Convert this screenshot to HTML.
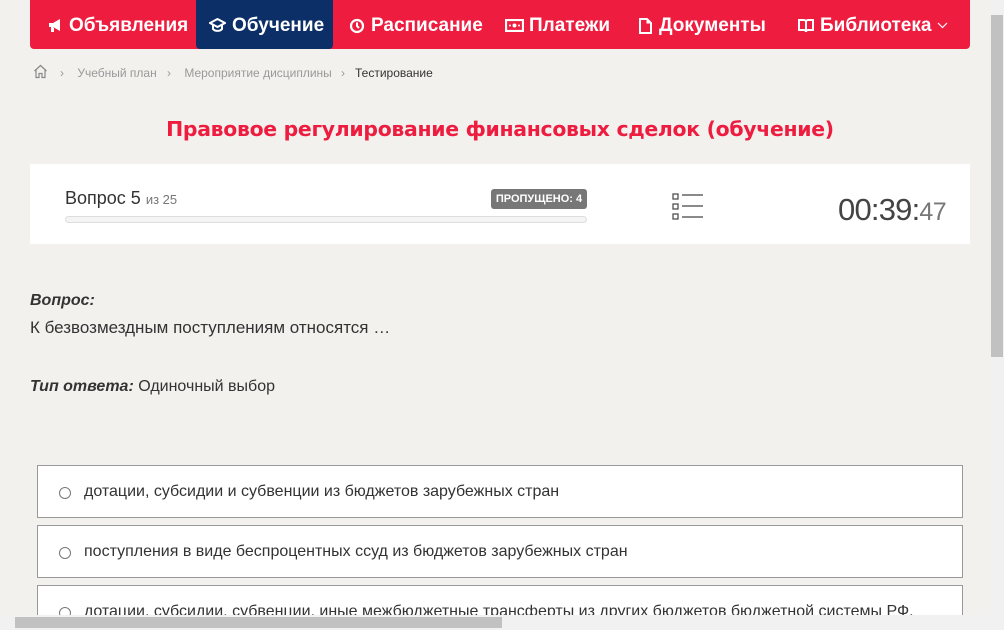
<!DOCTYPE html>
<html style="width:1004px;height:630px;overflow:hidden"><head><meta charset="utf-8"><style>
*{box-sizing:border-box;margin:0;padding:0}
body{width:1004px;height:630px;overflow:hidden;background:#f2f1ee;font-family:"Liberation Sans",sans-serif;position:relative;color:#333}
.nav{position:absolute;left:30px;top:0;width:940px;height:49px;background:#ee1d40;border-radius:0 0 4px 4px}
.nav div{position:absolute;top:0;height:49px;line-height:52px;color:#fff;font-size:19px;font-family:"Liberation Sans",sans-serif;font-weight:bold;white-space:nowrap}
.nav svg{position:absolute;top:18px}
.nav .act{background:#0b2f66;border-radius:0 0 4px 4px}
.bc{position:absolute;top:66px;font-size:12px;color:#999}
.title{position:absolute;top:117px;left:0;width:1000px;text-align:center;color:#ee1d40;font-size:20.4px;font-family:"DejaVu Sans",sans-serif;font-weight:bold;letter-spacing:-0.3px}
.panel{position:absolute;left:30px;top:164px;width:940px;height:80px;background:#fff}
.opt{position:absolute;left:37px;width:926px;height:53px;background:#fff;border:1px solid #999;font-size:16px;color:#333}
.opt span.r{position:absolute;left:21px;top:21px;width:12px;height:12px;border:1px solid #777;border-radius:50%}
.opt span.t{position:absolute;left:46px;top:17px}
</style></head><body>
<div class="nav">
 <svg style="left:18px" width="15" height="15" viewBox="0 0 15 15"><path d="M1 5H5L12 1V13L5 9H1Z M3 9V14H6V9" fill="#fff"/></svg>
 <div style="left:39px">Объявления</div>
 <div class="act" style="left:166px;width:137px"></div>
 <svg style="left:179px" width="17" height="15" viewBox="0 0 17 15"><path d="M8.5 1L16 5 8.5 9 1 5Z M4 7V11C6 13.5 11 13.5 13 11V7" fill="none" stroke="#fff" stroke-width="2"/></svg>
 <div style="left:202px">Обучение</div>
 <svg style="left:319px" width="16" height="16" viewBox="0 0 16 16"><circle cx="8" cy="8" r="6" fill="none" stroke="#fff" stroke-width="2.2"/><path d="M8 4.5V8L10 10" fill="none" stroke="#fff" stroke-width="2"/></svg>
 <div style="left:341px">Расписание</div>
 <svg style="left:475px;top:19px" width="19" height="13" viewBox="0 0 19 13"><rect x="1" y="1" width="17" height="11" fill="none" stroke="#fff" stroke-width="2.2"/><circle cx="9.5" cy="6.5" r="2" fill="#fff"/><circle cx="5" cy="6.5" r="1" fill="#fff"/><circle cx="14" cy="6.5" r="1" fill="#fff"/></svg>
 <div style="left:499px">Платежи</div>
 <svg style="left:609px" width="13" height="16" viewBox="0 0 13 16"><path d="M1 1H8L12 5V15H1Z" fill="none" stroke="#fff" stroke-width="2"/><path d="M8 1V5H12" fill="#fff" stroke="#fff"/></svg>
 <div style="left:629px">Документы</div>
 <svg style="left:768px" width="16" height="15" viewBox="0 0 16 15"><path d="M1 2H6C7 2 8 3 8 4V14C8 13 7 12 6 12H1Z M15 2H10C9 2 8 3 8 4V14C8 13 9 12 10 12H15Z" fill="none" stroke="#fff" stroke-width="2"/></svg>
 <div style="left:790px">Библиотека</div>
 <svg style="left:907px;top:22px" width="11" height="7" viewBox="0 0 11 7"><path d="M1 1L5.5 5.5 10 1" fill="none" stroke="#fff" stroke-width="1.2"/></svg>
</div>
<svg style="position:absolute;left:33px;top:64px" width="15" height="15" viewBox="0 0 15 15"><path d="M1.5 7 L7.5 1.5 L13.5 7 M3 6 V13.5 H6 V9.5 H9 V13.5 H12 V6" fill="none" stroke="#888" stroke-width="1.2"/></svg>
<div class="bc" style="left:60px">›&nbsp;&nbsp;&nbsp; Учебный план</div>
<div class="bc" style="left:167px">›&nbsp;&nbsp;&nbsp; Мероприятие дисциплины</div>
<div class="bc" style="left:341px">›&nbsp;&nbsp; <span style="color:#333">Тестирование</span></div>
<div class="title">Правовое регулирование финансовых сделок (обучение)</div>
<div class="panel">
 <div style="position:absolute;left:35px;top:24px;font-size:18px;color:#333">Вопрос 5 <span style="font-size:13px;color:#777">из 25</span></div>
 <div style="position:absolute;left:35px;top:52px;width:522px;height:7px;border:1px solid #ddd;border-radius:4px;background:#f4f4f4"></div>
 <div style="position:absolute;left:461px;top:25px;width:96px;height:20px;background:#777;border-radius:3px;color:#fff;font-size:11px;font-weight:bold;text-align:center;line-height:20px">ПРОПУЩЕНО: 4</div>
 <svg style="position:absolute;left:642px;top:29px" width="32" height="28" viewBox="0 0 32 28"><g fill="none" stroke="#444" stroke-width="1.2"><rect x="1" y="1" width="5" height="5"/><rect x="1" y="11" width="5" height="5"/><rect x="1" y="21" width="5" height="5"/><path d="M10 2H31M10 13H31M10 24H31"/></g></svg>
 <div style="position:absolute;left:808px;top:28px;font-size:31px;color:#444;letter-spacing:-0.8px">00:39:<span style="font-size:25px;color:#777;letter-spacing:-0.5px">47</span></div>
</div>
<div style="position:absolute;left:30px;top:292px;font-size:16px;font-weight:bold;font-style:italic;color:#333">Вопрос:</div>
<div style="position:absolute;left:30px;top:318px;font-size:17px;color:#333">К безвозмездным поступлениям относятся …</div>
<div style="position:absolute;left:30px;top:378px;font-size:16px;color:#333"><b><i>Тип ответа:</i></b> Одиночный выбор</div>
<div class="opt" style="top:465px"><span class="r"></span><span class="t">дотации, субсидии и субвенции из бюджетов зарубежных стран</span></div>
<div class="opt" style="top:525px"><span class="r"></span><span class="t">поступления в виде беспроцентных ссуд из бюджетов зарубежных стран</span></div>
<div class="opt" style="top:585px;height:45px;border-bottom:none"><span class="r"></span><span class="t">дотации, субсидии, субвенции, иные межбюджетные трансферты из других бюджетов бюджетной системы РФ.</span></div>
<div style="position:absolute;left:990px;top:0;width:14px;height:615px;background:#f1f1f1"></div>
<div style="position:absolute;left:991px;top:15px;width:12px;height:342px;background:#c1c1c1"></div>
<div style="position:absolute;left:0;top:615px;width:1004px;height:15px;background:#f1f1f1"></div>
<div style="position:absolute;left:15px;top:617px;width:487px;height:11px;background:#c1c1c1"></div>
</body></html>
